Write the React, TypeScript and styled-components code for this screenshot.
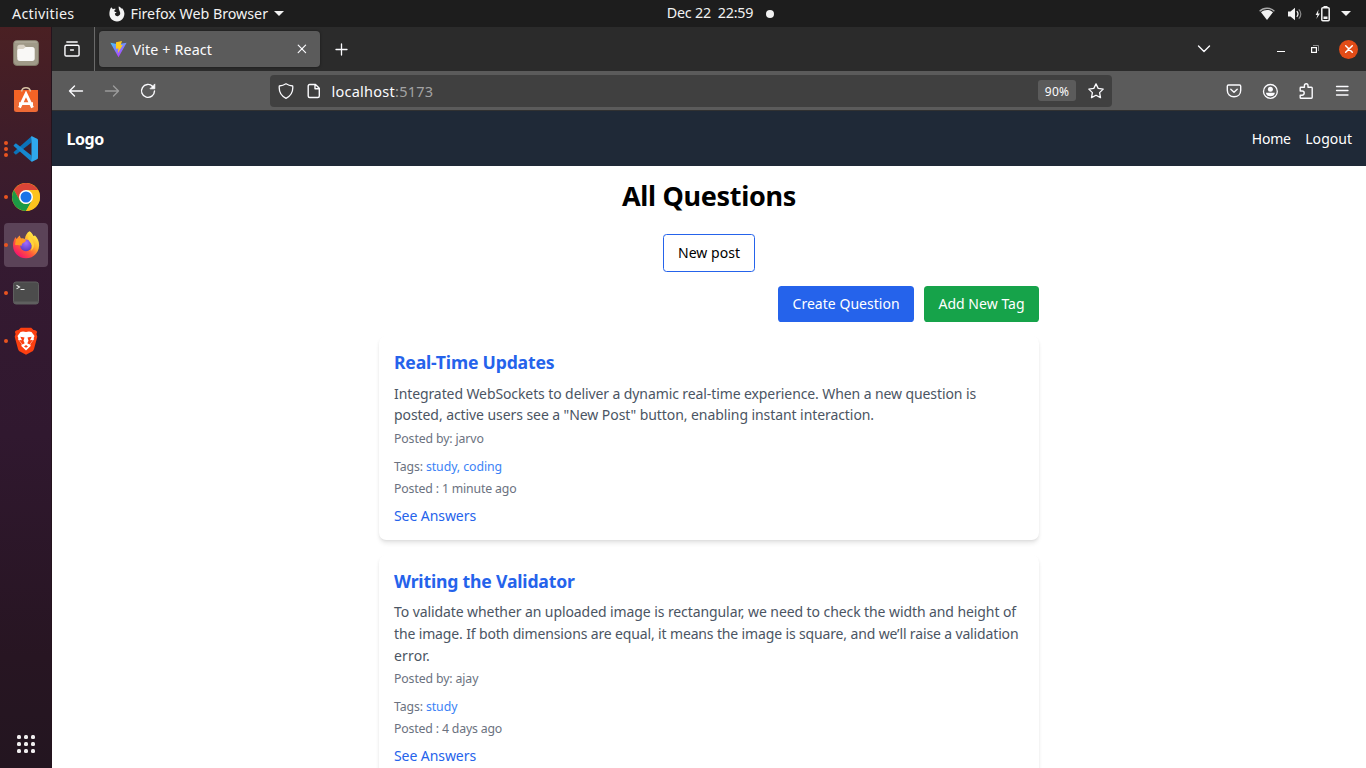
import React from "react";
import styled, { createGlobalStyle } from "styled-components";

const GlobalStyle = createGlobalStyle`
  *, *::before, *::after { box-sizing: border-box; }
  body {
    margin: 0;
    background: #fff;
    font-family: "Noto Sans", "Open Sans", sans-serif;
    font-size: 14px;
    overflow: hidden;
  }
  svg { display: block; flex: none; }
  h1, h2, p { margin: 0; }
  a { text-decoration: none; color: inherit; }
`;

const Desktop = styled.div`
  width: 1366px;
  height: 768px;
  display: grid;
  grid-template: 27px minmax(0, 1fr) / 52px minmax(0, 1fr);
  overflow: hidden;
`;

/* ---------- System bar ---------- */

const SystemBar = styled.header`
  grid-column: 1 / -1;
  display: grid;
  grid-template-columns: 1fr auto 1fr;
  align-items: center;
  background: #1d1d1d;
  color: #f2f2f2;
  font-size: 14.3px;
  line-height: 26px;
  white-space: pre;
`;

const SystemLeft = styled.div`
  display: flex;
  align-items: center;
  padding-left: 12px;
`;

const Activities = styled.span`
  width: 97px;
  letter-spacing: 0.29px;
`;

const AppMenu = styled.span`
  display: flex;
  align-items: center;
  letter-spacing: -0.04px;
  gap: 5.5px;
`;

const Clock = styled.div`
  display: flex;
  align-items: center;
  gap: 13px;
  letter-spacing: -0.22px;
  padding: 0 0 1px 75px;
`;

const ClockDot = styled.span`
  width: 8px;
  height: 8px;
  margin-top: 1px;
  border-radius: 50%;
  background: #f2f2f2;
`;

const StatusArea = styled.div`
  display: flex;
  justify-content: flex-end;
  align-items: center;
  gap: 12px;
  padding-right: 15px;

  & > :last-child { margin-left: -2px; }
`;

/* ---------- Dock ---------- */

const Dock = styled.aside`
  display: flex;
  flex-direction: column;
  padding: 2px 4px 0;
  background: linear-gradient(#4a2023 0%, #3f1d29 14%, #351a31 30%, #30182f 55%, #271522 85%, #231520 100%);
  border-right: 1px solid #24131d;
`;

const DockItem = styled.div<{ $active?: boolean }>`
  position: relative;
  width: 44px;
  height: 44px;
  margin: 2px 0;
  border-radius: 4px;
  display: flex;
  align-items: center;
  justify-content: center;
  background: ${(p) => (p.$active ? "#5b4358" : "transparent")};
`;

const RunningDots = styled.span`
  position: absolute;
  left: 0;
  top: 0;
  bottom: 0;
  display: flex;
  flex-direction: column;
  justify-content: center;
  gap: 2px;
`;

const RunningDot = styled.i`
  width: 4px;
  height: 4px;
  border-radius: 50%;
  background: #e95420;
`;

const AppGrid = styled.div`
  margin: auto 0 15px;
  align-self: center;
  display: grid;
  grid-template-columns: repeat(3, 4px);
  gap: 3px;
`;

const AppGridDot = styled.i`
  width: 4px;
  height: 4px;
  border-radius: 1.5px;
  background: #f0eeef;
`;

/* ---------- Browser ---------- */

const Browser = styled.main`
  display: grid;
  grid-template-rows: 44px 40px minmax(0, 1fr);
  min-width: 0;
`;

const TabStrip = styled.div`
  display: flex;
  align-items: center;
  background: #2b2b2b;
  color: #fbfbfe;
`;

const RecentButton = styled.div`
  width: 43px;
  height: 44px;
  padding: 0 0 1px 12px;
  display: flex;
  align-items: center;
  border-right: 1px solid #6a6a6a;
`;

const Tab = styled.div`
  width: 221px;
  height: 36px;
  margin-left: 4px;
  padding: 0 11px;
  display: flex;
  align-items: center;
  border-radius: 4px;
  background: #5b5b5b;
  box-shadow: 0 0 3px rgba(0, 0, 0, 0.45);
`;

const TabTitle = styled.span`
  flex: 1;
  margin-left: 5.5px;
  font-size: 14.3px;
  letter-spacing: 0.12px;
`;

const NewTab = styled.div`
  margin-left: 15px;
`;

const WindowControls = styled.div`
  margin-left: auto;
  display: flex;
  align-items: center;
  padding-right: 8px;
`;

const ListTabs = styled.div`
  margin-right: 66px;
`;

const Minimize = styled.div`
  width: 8px;
  height: 1px;
  margin: 5px 26px 0 0;
  background: #fff;
`;

const Restore = styled.div`
  margin-right: 20px;
`;

const CloseWindow = styled.div`
  width: 19px;
  height: 19px;
  border-radius: 50%;
  display: flex;
  align-items: center;
  justify-content: center;
  background: #e24c17;
`;

const Toolbar = styled.div`
  display: flex;
  align-items: center;
  padding: 0 16px;
  background: #5b5b5b;
  border-bottom: 1px solid #313131;
  color: #fbfbfe;
`;

const NavButtons = styled.div`
  display: flex;
  gap: 20px;
`;

const AddressBar = styled.div`
  width: 842px;
  height: 32px;
  margin-left: 114px;
  padding: 0 8px;
  display: flex;
  align-items: center;
  border-radius: 4px;
  background: #404040;
`;

const Address = styled.span`
  flex: 1;
  font-size: 14.5px;
  letter-spacing: 0.25px;
  margin-left: 9.5px;
`;

const PortLabel = styled.span`
  color: #a3a3a4;
`;

const ZoomBadge = styled.span`
  width: 38px;
  height: 21px;
  margin-right: 12px;
  padding-top: 1px;
  border-radius: 3px;
  background: #5b5b5b;
  font-size: 12px;
  line-height: 21px;
  text-align: center;
  letter-spacing: 0.25px;
`;

const PageGlyph = styled.div`
  margin-left: 12px;
`;

const ToolbarActions = styled.div`
  margin-left: auto;
  display: flex;
  gap: 20px;
`;

/* ---------- Web page ---------- */

const Page = styled.div`
  overflow: hidden;
  background: #fff;
  color: #000;
`;

const SiteNav = styled.nav`
  height: 55px;
  padding: 0 13.8px 0 14.4px;
  display: flex;
  align-items: center;
  justify-content: space-between;
  background: #1f2937;
  color: #fff;
`;

const Logo = styled.span`
  font-size: 16px;
  font-weight: 700;
  letter-spacing: -0.39px;
`;

const NavLinks = styled.div`
  display: flex;
  gap: 14.4px;
`;

const NavLink = styled.a<{ $track: number }>`
  letter-spacing: ${(p) => p.$track}px;
`;

const Content = styled.section`
  width: 660px;
  margin: 0 auto;
  padding-top: 14.4px;
  display: flex;
  flex-direction: column;
`;

const PageTitle = styled.h1`
  font-size: 27px;
  line-height: 32.4px;
  font-weight: 700;
  letter-spacing: -0.32px;
  text-align: center;
`;

const Button = styled.button<{ $tone: "outline" | "blue" | "green" }>`
  height: ${(p) => (p.$tone === "outline" ? 38 : 36)}px;
  padding: 0 14.4px;
  border: ${(p) => (p.$tone === "outline" ? "1px solid #2563eb" : "0")};
  border-radius: 3.6px;
  background: ${(p) => ({ outline: "#fff", blue: "#2563eb", green: "#16a34a" })[p.$tone]};
  color: ${(p) => (p.$tone === "outline" ? "#000" : "#fff")};
  font: 400 14px/20px "Noto Sans", sans-serif;
  letter-spacing: 0.03px;
`;

const NewPostRow = styled.div`
  display: flex;
  justify-content: center;
  margin-top: 21px;
`;

const ActionRow = styled.div`
  display: flex;
  justify-content: flex-end;
  gap: 10px;
  margin: 14px 0;
`;

const QuestionList = styled.div`
  display: flex;
  flex-direction: column;
  gap: 14.4px;
`;

const Card = styled.article`
  flex: none;
  padding: 14.4px 15px 13.8px;
  border-radius: 7.2px;
  background: #fff;
  box-shadow: 0 3.6px 5.4px -1px rgba(0, 0, 0, 0.1), 0 1.8px 3.6px -1.8px rgba(0, 0, 0, 0.1);
  color: #6b7280;
  font-size: 12.3px;
  line-height: 18px;
  letter-spacing: -0.13px;
`;

const CardTitle = styled.h2`
  font-size: 17.6px;
  line-height: 25.2px;
  font-weight: 700;
  letter-spacing: -0.18px;
  color: #2563eb;
`;

const CardBody = styled.p`
  margin-top: 7.3px;
  font-size: 14px;
  line-height: 21.6px;
  color: #4b5563;
  white-space: nowrap;
`;

const BodyLine = styled.span<{ $track: number }>`
  display: block;
  letter-spacing: ${(p) => p.$track}px;
`;

const Author = styled.p`
  margin-top: 3.7px;
`;

const Tags = styled.p`
  margin-top: 10px;
`;

const TagNames = styled.span`
  color: #3b82f6;
  letter-spacing: -0.07px;
`;

const PostedAt = styled.p`
  margin-top: 4px;
  letter-spacing: -0.17px;
`;

const AnswersLink = styled.a`
  display: block;
  margin-top: 7.2px;
  font-size: 14px;
  line-height: 21.6px;
  letter-spacing: -0.07px;
  color: #2563eb;
`;

/* ---------- Icons ---------- */

const stroke = {
  fill: "none",
  stroke: "currentColor",
  strokeWidth: 1.3,
  strokeLinecap: "round" as const,
  strokeLinejoin: "round" as const,
};

const FirefoxSymbol = () => (
  <svg width="16" height="16" viewBox="0 0 16 16" fill="#f2f2f2">
    <path d="M2.2 1.2 4 3.2C5 2.700 6 2.700 6.700 3L5.400 4.600C5.100 5.800 6 6.200 7.600 6.100 7.200 7 6.400 7.300 5.800 7.800 6.200 9.900 7.800 10.600 9 10.200c1.800-.6 2.500-2.100 2.100-3.700C10.800 4.700 9.500 4 9.700.5c1.200.3 2 1 2.600 2l.8-.3c2.500 2.600 3 6.400 1.400 9.200-1.400 2.600-3.900 4-6.500 4C3.500 15.400.4 12 .4 8c0-2.600.5-4.800 1.800-6.800Z" />
  </svg>
);

const CaretDown = () => (
  <svg width="10" height="5" viewBox="0 0 10 5" fill="#f2f2f2">
    <path d="M0 0h10L5 5Z" />
  </svg>
);

const WifiIcon = () => (
  <svg width="16" height="14" viewBox="0 0 16 14">
    <path d="M.6 4.300C4.800.2 11.200.2 15.400 4.300" fill="none" stroke="#a9a9a9" strokeWidth="1.300" />
    <path d="M2 5.200C5.500 2.300 10.500 2.300 14 5.200L8 13Z" fill="#f2f2f2" />
  </svg>
);

const VolumeIcon = () => (
  <svg width="16" height="14" viewBox="0 0 16 14">
    <path d="M1 4.500h2.500L8 .8v12.400L3.500 9.500H1Z" fill="#f2f2f2" />
    <path d="M9.800 4.200c1.400 1.600 1.400 4 0 5.600" fill="none" stroke="#f2f2f2" strokeWidth="1.200" />
    <path d="M11.800 2.300c2.700 2.700 2.700 6.700 0 9.400" fill="none" stroke="#8c8c8c" strokeWidth="1.200" />
  </svg>
);

const BatteryIcon = () => (
  <svg width="16" height="16" viewBox="0 0 16 16">
    <path d="M3.500 3.500.6 9h1.900L1.300 13 5 7.400H3Z" fill="#f2f2f2" />
    <rect x="6.800" y="1.800" width="7.400" height="13" rx="1" fill="none" stroke="#f2f2f2" strokeWidth="1.500" />
    <path d="M8.500 0h4v1.500h-4ZM8.500 10.500h4V13h-4Z" fill="#f2f2f2" />
  </svg>
);

const FilesIcon = () => (
  <svg width="26" height="26" viewBox="0 0 26 26">
    <rect x=".5" y=".5" width="25" height="25" rx="3.500" fill="#a09a88" stroke="#817968" />
    <rect x="1.500" y="1.500" width="23" height="1" fill="#b6b0a0" />
    <path d="M4.300 7.200c0-1.600.9-2.500 2.500-2.500h4l2 2.300H19v10H4.300Z" fill="#d9d2c5" />
    <path d="M4.300 11c0-1.400.8-2 2-2h4l2.400-2h6.500c1.600 0 2.500.9 2.500 2.400v9c0 1.600-.9 2.500-2.500 2.500H6.800c-1.600 0-2.500-.9-2.500-2.500Z" fill="#f9f8f6" />
  </svg>
);

const SoftwareIcon = () => (
  <svg width="26" height="28" viewBox="0 0 26 28">
    <path d="M1 3h24v19.500q0 2.500-2.500 2.500h-19Q1 25 1 22.500Z" fill="#ee6a35" />
    <path d="M1 3h24v10H1Z" fill="#f36325" />
    <path d="M6.500 20.700 13 6.800l6.500 13.900M6 16.600h14" fill="none" stroke="#fff" strokeWidth="2.900" />
    <path d="M8.500 4.500C9 1.800 10.700.8 13 .8s4 1 4.500 3.700" fill="none" stroke="#d8c3a5" strokeWidth="1.500" />
  </svg>
);

const CodeIcon = () => (
  <svg width="26" height="26" viewBox="0 0 26 26">
    <path d="m18.500 6.500-15 11.700c-.5.300-.9.300-1.300 0L1 17.100c-.5-.4-.5-1 0-1.400L18 .7Z" fill="#0b72b8" />
    <path d="m18.500 19.500-15-11.700c-.5-.3-.9-.3-1.300 0L1 8.900c-.5.400-.5 1 0 1.400L18 25.300Z" fill="#1688d0" />
    <path d="M18 .7c.5-.5 1-.4 1.500-.2l4.600 2.200c.6.300.9.800.9 1.500v17.600c0 .7-.3 1.200-.9 1.500l-4.600 2.200c-.6.300-1.100.2-1.500-.2l.5-5.800V6.500Z" fill="#2fa8ee" />
  </svg>
);

const ChromeIcon = () => (
  <svg width="28" height="28" viewBox="0 0 28 28">
    <circle cx="14" cy="14" r="14" fill="#fbc116" />
    <path d="M14 7h12.120A14 14 0 0 0 1.880 7l6.060 10.500Z" fill="#db4437" />
    <path d="M20.060 17.500 14 28A14 14 0 0 1 1.880 7l6.060 10.500A7 7 0 0 0 17 20.300Z" fill="#1c9a45" />
    <path d="M14 7h12.120A14 14 0 0 1 14 28l6.060-10.500A7 7 0 0 0 19 9Z" fill="#fcc31e" />
    <circle cx="14" cy="14" r="7" fill="#fff" />
    <circle cx="14" cy="14" r="5.500" fill="#1a73e8" />
  </svg>
);

const FirefoxIcon = () => (
  <svg width="28" height="28" viewBox="0 0 28 28">
    <defs>
      <linearGradient id="fx-flame" x1=".85" y1=".1" x2=".2" y2=".9">
        <stop offset="0" stopColor="#fff14a" />
        <stop offset=".35" stopColor="#ffb52c" />
        <stop offset=".65" stopColor="#ff5a3a" />
        <stop offset="1" stopColor="#f5156c" />
      </linearGradient>
      <radialGradient id="fx-globe" cx=".5" cy=".3" r=".7">
        <stop offset="0" stopColor="#a36cff" />
        <stop offset="1" stopColor="#5a3bc0" />
      </radialGradient>
    </defs>
    <path d="M17.500.3c1.600.9 3.200 2.600 3.900 4.700l1.600-.4c2.600 2.400 4.200 6 4.100 9.800C27 21.700 21.300 27.300 14 27.300S1 21.600 1 14.500C1 11 2.100 8 3.600 6c.2 1 .6 1.700 1.100 2.100C5.500 6.500 6.600 5.200 8 4.500c0 1.300.4 2.300 1.200 2.900 1.200-.2 2.500 0 3.700.5.400-3.100 2-6.200 4.600-7.600Z" fill="url(#fx-flame)" />
    <circle cx="14" cy="14.300" r="5.900" fill="url(#fx-globe)" />
    <path d="M4 8c2-1 4.300-.7 6.200.5 1.200.1 2.400.2 3.800.8-.4 1.800-1.700 2.200-2.900 2.700-1.300.5-1.700 1.600-1.200 2.800-1.600-.8-3.800-.1-6.900-1Z" fill="#ff9a20" />
    <path d="M17 2.500c1 4 4.500 6 5 11 .2 2.800-1.300 5.200-3.300 6.500 1.400-2.300 1.600-5 .3-7.500-1.200-2-4.200-4-2-10Z" fill="#ffd43a" />
  </svg>
);

const TerminalIcon = () => (
  <svg width="26" height="24" viewBox="0 0 26 24">
    <rect x=".5" y="1" width="25" height="22" rx="2.500" fill="#4c4c4c" stroke="#5f5f5f" />
    <path d="M1 20.500v.5q0 2 2 2h20q2 0 2-2v-.5Z" fill="#5f5f5f" />
    <path d="m3.500 4.300 3 1.800-3 1.800M7.500 8.500h4" fill="none" stroke="#e9e9e9" strokeWidth="1.100" />
  </svg>
);

const BraveIcon = () => (
  <svg width="24" height="28" viewBox="0 0 24 28">
    <path d="M6.800.7h10.400l2.300 2.400c1.500-.3 2.600.4 3.600 1.800l-.7 2.200.9 2.600-3.300 12.200c-.4 1.300-1 2-2 2.700l-6 3.200-6-3.200c-1-.7-1.600-1.400-2-2.700L.7 9.700l.9-2.600L.9 4.900c1-1.400 2.100-2.100 3.600-1.800Z" fill="#fb3f10" />
    <path d="M12 4.900 15 4.500l2.500.4 3 4-.8 2.200.2 1.300-3.700 4.500.5 2-4.700 4.500-4.700-4.500.5-2-3.700-4.500.2-1.300-.8-2.200 3-4L9 4.500Z" fill="#fff" />
    <path d="m6.300 9.800 4.200.7-1 3.300 1.200 2.400-2.200 1.300-1.500-2-2-2.500 3 .3ZM17.700 9.800l-4.200.7 1 3.300-1.200 2.400 2.200 1.300 1.500-2 2-2.500-3 .3ZM12 18l2 1.400-2 1.400-2-1.400Z" fill="#fb3f10" />
  </svg>
);

const RecentIcon = () => (
  <svg width="16" height="16" viewBox="0 0 17 17" {...stroke} strokeWidth={1.500}>
    <path d="M3 1h11M2.500 4.500h12q1.500 0 1.500 1.500v8.500q0 1.500-1.500 1.500h-12Q1 16 1 14.500V6q0-1.500 1.500-1.500ZM7 9.500h3" />
  </svg>
);

const ViteIcon = () => (
  <svg width="17" height="17" viewBox="0 0 17 17">
    <defs>
      <linearGradient id="vite-v" x1="0" y1="0" x2=".5" y2="1">
        <stop offset="0" stopColor="#41c7ff" />
        <stop offset="1" stopColor="#b63cff" />
      </linearGradient>
    </defs>
    <path d="M.4 1.800 8.100 3.200l8.500-1.400L8.500 16.300Z" fill="url(#vite-v)" />
    <path d="m6 1.300 6-1.200-1.400 4.200 2.200-.4-5 8.300.7-4.800-2.500.4Z" fill="#ffcb1c" />
  </svg>
);

const TabCloseIcon = () => (
  <svg width="14" height="14" viewBox="0 0 14 14" {...stroke} strokeWidth={1.200}>
    <path d="m3.200 3.200 7.400 7.400m0-7.400-7.400 7.400" />
  </svg>
);

const PlusIcon = () => (
  <svg width="13" height="13" viewBox="0 0 13 13" {...stroke}>
    <path d="M6.500 1v11M1 6.500h11" />
  </svg>
);

const ChevronIcon = () => (
  <svg width="14" height="10" viewBox="0 0 14 10" {...stroke} strokeWidth={1.400}>
    <path d="m1.500 2 5.500 5.500L12.500 2" />
  </svg>
);

const RestoreIcon = () => (
  <svg width="8" height="8" viewBox="0 0 8 8" fill="none">
    <path d="M2 .5h5.500V6" stroke="#8f8f8f" />
    <rect x=".6" y="2.600" width="4.800" height="4.800" stroke="#fff" strokeWidth="1.200" />
  </svg>
);

const CloseIcon = () => (
  <svg width="10" height="10" viewBox="0 0 10 10" {...stroke} stroke="#fff" strokeWidth={1.500}>
    <path d="m1.700 1.700 6.600 6.600m0-6.600L1.700 8.300" />
  </svg>
);

const ArrowIcon = ({ forward = false }: { forward?: boolean }) => (
  <svg width="16" height="16" viewBox="0 0 16 16" {...stroke} stroke={forward ? "#9b9b9b" : "#fbfbfe"} strokeWidth={1.400}>
    <path d={forward ? "M1.500 8h13M9.500 3l5 5-5 5" : "M14.500 8h-13M6.500 3l-5 5 5 5"} />
  </svg>
);

const ReloadIcon = () => (
  <svg width="16" height="16" viewBox="0 0 16 16" {...stroke} strokeWidth={1.400}>
    <path d="M12.700 3.400A6.500 6.500 0 1 0 14.500 8" />
    <path d="M14.800 1.300v4.500h-4.500Z" fill="currentColor" strokeWidth=".8" />
  </svg>
);

const ShieldIcon = () => (
  <svg width="16" height="16" viewBox="0 0 16 16" {...stroke}>
    <path d="M8 .8c2 1.300 4.300 2 6.700 2.200.6 5.500-1.700 9.900-6.700 12.300C3 12.900.7 8.500 1.300 3 3.700 2.800 6 2.100 8 .8Z" />
  </svg>
);

const DocumentIcon = () => (
  <svg width="16" height="16" viewBox="0 0 16 16" {...stroke} strokeWidth={1.400}>
    <path d="M3.700 1.500h5.800l3.800 3.800v7.700q0 1.500-1.500 1.500H3.700q-1.500 0-1.500-1.500V3q0-1.500 1.500-1.500ZM9 1.500v4.300h4.300" />
  </svg>
);

const StarIcon = () => (
  <svg width="16" height="16" viewBox="0 0 16 16" {...stroke}>
    <path d="m8 .9 2.200 4.500 5 .7-3.600 3.500.9 5L8 12.200l-4.500 2.400.9-5L.8 6.100l5-.7Z" />
  </svg>
);

const PocketIcon = () => (
  <svg width="16" height="16" viewBox="0 0 16 16" {...stroke} strokeWidth={1.400}>
    <path d="M2.500 2h11q1.200 0 1.200 1.200v4c0 4-2.800 6.600-6.700 6.600S1.300 11.200 1.300 7.200v-4Q1.300 2 2.500 2ZM4.800 6.300 8 9.300l3.200-3" />
  </svg>
);

const AccountIcon = () => (
  <svg width="16" height="16" viewBox="0 0 16 16">
    <circle cx="8.400" cy="8.400" r="6.900" fill="none" stroke="#fbfbfe" strokeWidth="1.300" />
    <circle cx="8.400" cy="6.200" r="2.500" fill="#fbfbfe" />
    <path d="M3.900 9.700h9c-.3 2.300-2 3.600-4.500 3.600s-4.200-1.300-4.500-3.600Z" fill="#fbfbfe" />
  </svg>
);

const ExtensionsIcon = () => (
  <svg width="16" height="16" viewBox="-.5 0 16 16" {...stroke} strokeWidth={1.400}>
    <path d="M1.700 7V5q0-.7.700-.7h3.500V2.500a1.800 1.800 0 0 1 3.600 0v1.800h3.400q.8 0 .8.800v9.200q0 .9-.8.900H2.500q-.8 0-.8-.8v-2.200h1.900a1.800 1.800 0 0 0 0-4.200H1.700Z" />
  </svg>
);

const MenuIcon = () => (
  <svg width="16" height="16" viewBox="0 0 16 16" {...stroke}>
    <path d="M2.500 3.500h11.500M2.500 7.500h11.500M2.500 12h11.500" />
  </svg>
);

/* ---------- Data ---------- */

type Line = { text: string; track: number };
type Question = { title: string; body: Line[]; author: string; tags: string; posted: string };

const questions: Question[] = [
  {
    title: "Real-Time Updates",
    body: [
      { text: "Integrated WebSockets to deliver a dynamic real-time experience. When a new question is", track: -0.098 },
      { text: 'posted, active users see a "New Post" button, enabling instant interaction.', track: -0.075 },
    ],
    author: "jarvo",
    tags: "study, coding",
    posted: "1 minute ago",
  },
  {
    title: "Writing the Validator",
    body: [
      { text: "To validate whether an uploaded image is rectangular, we need to check the width and height of", track: -0.088 },
      { text: "the image. If both dimensions are equal, it means the image is square, and we’ll raise a validation", track: -0.142 },
      { text: "error.", track: 0.17 },
    ],
    author: "ajay",
    tags: "study",
    posted: "4 days ago",
  },
];

const dockApps = [
  { name: "files", Icon: FilesIcon, windows: 0 },
  { name: "software", Icon: SoftwareIcon, windows: 0 },
  { name: "code", Icon: CodeIcon, windows: 3 },
  { name: "chrome", Icon: ChromeIcon, windows: 1 },
  { name: "firefox", Icon: FirefoxIcon, windows: 1, active: true },
  { name: "terminal", Icon: TerminalIcon, windows: 1 },
  { name: "brave", Icon: BraveIcon, windows: 1 },
];

const QuestionCard = ({ title, body, author, tags, posted }: Question) => (
  <Card>
    <CardTitle>{title}</CardTitle>
    <CardBody>
      {body.map((line) => (
        <BodyLine key={line.text} $track={line.track}>{line.text}</BodyLine>
      ))}
    </CardBody>
    <Author>Posted by: {author}</Author>
    <Tags>Tags: <TagNames>{tags}</TagNames></Tags>
    <PostedAt>Posted : {posted}</PostedAt>
    <AnswersLink>See Answers</AnswersLink>
  </Card>
);

export default function App() {
  return (
    <>
      <GlobalStyle />
      <Desktop>
        <SystemBar>
          <SystemLeft>
            <Activities>Activities</Activities>
            <AppMenu><FirefoxSymbol />Firefox Web Browser<CaretDown /></AppMenu>
          </SystemLeft>
          <Clock>{"Dec 22  22:59"}<ClockDot /></Clock>
          <StatusArea><WifiIcon /><VolumeIcon /><BatteryIcon /><CaretDown /></StatusArea>
        </SystemBar>
        <Dock>
          {dockApps.map(({ name, Icon, windows, active }) => (
            <DockItem key={name} $active={active}>
              <RunningDots>
                {Array.from({ length: windows }, (_, i) => <RunningDot key={i} />)}
              </RunningDots>
              <Icon />
            </DockItem>
          ))}
          <AppGrid>
            {Array.from({ length: 9 }, (_, i) => <AppGridDot key={i} />)}
          </AppGrid>
        </Dock>
        <Browser>
          <TabStrip>
            <RecentButton><RecentIcon /></RecentButton>
            <Tab><ViteIcon /><TabTitle>Vite + React</TabTitle><TabCloseIcon /></Tab>
            <NewTab><PlusIcon /></NewTab>
            <WindowControls>
              <ListTabs><ChevronIcon /></ListTabs>
              <Minimize />
              <Restore><RestoreIcon /></Restore>
              <CloseWindow><CloseIcon /></CloseWindow>
            </WindowControls>
          </TabStrip>
          <Toolbar>
            <NavButtons><ArrowIcon /><ArrowIcon forward /><ReloadIcon /></NavButtons>
            <AddressBar>
              <ShieldIcon />
              <PageGlyph><DocumentIcon /></PageGlyph>
              <Address>localhost<PortLabel>:5173</PortLabel></Address>
              <ZoomBadge>90%</ZoomBadge>
              <StarIcon />
            </AddressBar>
            <ToolbarActions><PocketIcon /><AccountIcon /><ExtensionsIcon /><MenuIcon /></ToolbarActions>
          </Toolbar>
          <Page>
            <SiteNav>
              <Logo>Logo</Logo>
              <NavLinks>
                <NavLink $track={-0.2}>Home</NavLink>
                <NavLink $track={0.07}>Logout</NavLink>
              </NavLinks>
            </SiteNav>
            <Content>
              <PageTitle>All Questions</PageTitle>
              <NewPostRow><Button $tone="outline">New post</Button></NewPostRow>
              <ActionRow>
                <Button $tone="blue">Create Question</Button>
                <Button $tone="green">Add New Tag</Button>
              </ActionRow>
              <QuestionList>
                {questions.map((q) => <QuestionCard key={q.title} {...q} />)}
              </QuestionList>
            </Content>
          </Page>
        </Browser>
      </Desktop>
    </>
  );
}
